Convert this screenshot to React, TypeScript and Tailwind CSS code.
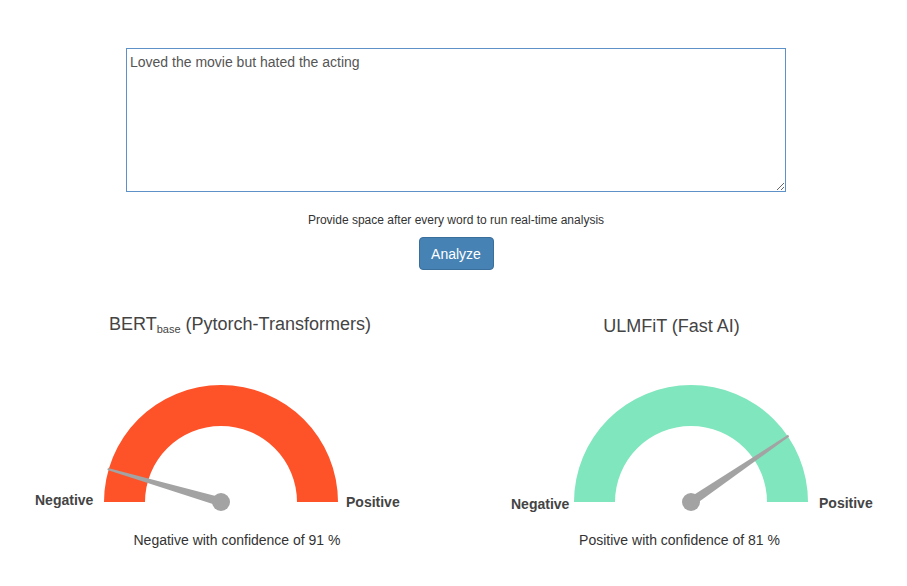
import React from 'react'

type GaugeProps = {
  value: number // 0 = fully negative, 1 = fully positive
  color: string
  cx: number
  cy: number
  negX: number
  negY: number
  posX: number
  posY: number
}

function Gauge({ value, color, cx, cy, negX, negY, posX, posY }: GaugeProps) {
  const R = 117
  const r = 76
  const baseY = 122
  const arc = `M ${cx - R} ${baseY} A ${R} ${R} 0 0 1 ${cx + R} ${baseY} L ${cx + r} ${baseY} A ${r} ${r} 0 0 0 ${cx - r} ${baseY} Z`

  // needle
  const theta = value * Math.PI
  const L = 118
  const ux = -Math.cos(theta)
  const uy = -Math.sin(theta)
  const px = -uy
  const py = ux
  const tipX = cx + ux * L
  const tipY = cy + uy * L
  const bw = 4.5
  const tw = 1
  const needle = [
    `${cx + px * bw},${cy + py * bw}`,
    `${tipX + px * tw},${tipY + py * tw}`,
    `${tipX - px * tw},${tipY - py * tw}`,
    `${cx - px * bw},${cy - py * bw}`,
  ].join(' ')

  return (
    <svg width="454" height="140" className="block" style={{ fontFamily: '"Liberation Sans", Arial, sans-serif' }}>
      <path d={arc} fill={color} />
      <polygon points={needle} fill="#a3a3a3" />
      <circle cx={cx} cy={cy} r="9" fill="#a3a3a3" />
      <text x={negX} y={negY} fontSize="14" fontWeight="700" fill="#444">
        Negative
      </text>
      <text x={posX} y={posY} fontSize="14" fontWeight="700" fill="#444">
        Positive
      </text>
    </svg>
  )
}

export default function App() {
  return (
    <div className="w-[907px] h-[586px] bg-white overflow-hidden font-['Liberation_Sans',Arial,sans-serif] text-[#333]">
      <div className="pt-[48px] flex flex-col items-center">
        {/* Input */}
        <textarea
          defaultValue="Loved the movie but hated the acting"
          className="block ml-[5px] w-[660px] h-[144px] border border-[#5d91c7] px-[3px] pt-[5px] text-[14px] leading-[17px] text-[#555] outline-none"
        />
        <p className="mt-[20px] ml-[5px] text-[12px] leading-[17px] text-[#333]">
          Provide space after every word to run real-time analysis
        </p>
        <button className="mt-[8px] ml-[5px] w-[75px] h-[33px] flex items-center justify-center rounded-[4px] bg-[#4682b4] border border-[#3a6f9c] text-white text-[14px] leading-[20px] pt-px">
          Analyze
        </button>
      </div>

      {/* Gauges */}
      <div className="flex mt-[44px]">
        <div className="w-[454px] flex flex-col">
          <h2 className="ml-[26px] text-center text-[18px] leading-[20px] text-[#444]">
            BERT<sub className="text-[11px]">base</sub> (Pytorch-Transformers)
          </h2>
          <div className="mt-[46px]">
            <Gauge value={0.09} color="#fe5229" cx={221} cy={122} negX={35} negY={125} posX={346} posY={127} />
          </div>
          <p className="mt-[10px] ml-[20px] text-center text-[14px] leading-[20px]">
            Negative with confidence of 91 %
          </p>
        </div>
        <div className="w-[453px] flex flex-col">
          <h2 className="mt-[2px] mr-[18px] text-center text-[18px] leading-[20px] text-[#444]">
            ULMFiT (Fast AI)
          </h2>
          <div className="mt-[44px]">
            <Gauge value={0.81} color="#7fe6bd" cx={237} cy={122} negX={57} negY={129} posX={365} posY={128} />
          </div>
          <p className="mt-[10px] mr-[2px] text-center text-[14px] leading-[20px]">
            Positive with confidence of 81 %
          </p>
        </div>
      </div>
    </div>
  )
}
